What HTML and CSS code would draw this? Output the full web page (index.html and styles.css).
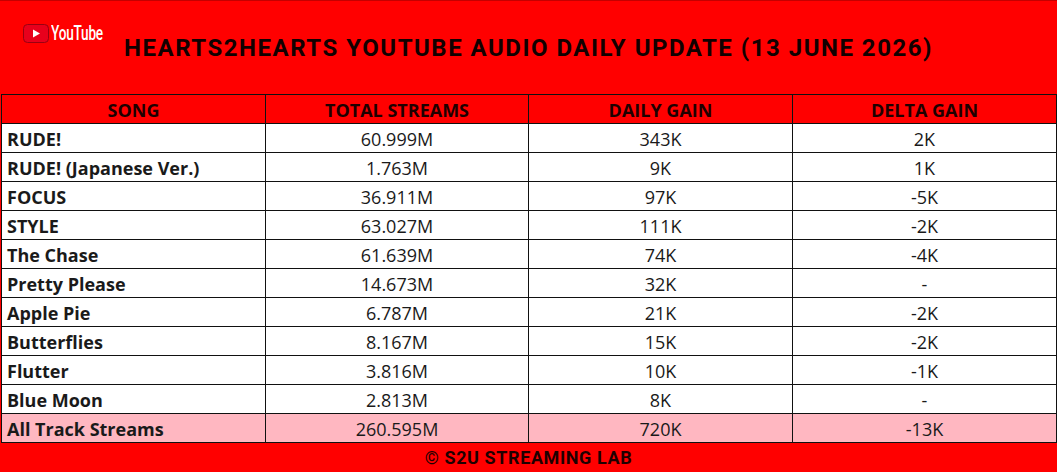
FILE: index.html
```html
<!DOCTYPE html>
<html lang="en">
<head>
<meta charset="utf-8">
<title>Hearts2Hearts YouTube Audio Daily Update</title>
<link rel="stylesheet" href="styles.css">
</head>
<body>
<div class="sheet">
  <header class="banner">
    <div class="logo">
      <svg class="yt-icon" width="26" height="19" viewBox="0 0 26 19" aria-hidden="true">
        <rect x="0.5" y="0.5" width="25" height="18" rx="4" ry="4" fill="#e8001c" stroke="#9a0010" stroke-width="1"/>
        <polygon points="10,5.5 10,13.5 17,9.5" fill="#ffffff"/>
      </svg>
      <span class="yt-word">YouTube</span>
    </div>
    <h1 class="title">HEARTS2HEARTS YOUTUBE AUDIO DAILY UPDATE (13 JUNE 2026)</h1>
    <div class="spacer"></div>
  </header>
  <table class="stats">
    <colgroup>
      <col class="c1"><col class="c2"><col class="c3"><col class="c4">
    </colgroup>
    <thead>
      <tr><th>SONG</th><th>TOTAL STREAMS</th><th>DAILY GAIN</th><th>DELTA GAIN</th></tr>
    </thead>
    <tbody>
      <tr><td class="song">RUDE!</td><td>60.999M</td><td>343K</td><td>2K</td></tr>
      <tr><td class="song">RUDE! (Japanese Ver.)</td><td>1.763M</td><td>9K</td><td>1K</td></tr>
      <tr><td class="song">FOCUS</td><td>36.911M</td><td>97K</td><td>-5K</td></tr>
      <tr><td class="song">STYLE</td><td>63.027M</td><td>111K</td><td>-2K</td></tr>
      <tr><td class="song">The Chase</td><td>61.639M</td><td>74K</td><td>-4K</td></tr>
      <tr><td class="song">Pretty Please</td><td>14.673M</td><td>32K</td><td>-</td></tr>
      <tr><td class="song">Apple Pie</td><td>6.787M</td><td>21K</td><td>-2K</td></tr>
      <tr><td class="song">Butterflies</td><td>8.167M</td><td>15K</td><td>-2K</td></tr>
      <tr><td class="song">Flutter</td><td>3.816M</td><td>10K</td><td>-1K</td></tr>
      <tr><td class="song">Blue Moon</td><td>2.813M</td><td>8K</td><td>-</td></tr>
      <tr class="total"><td class="song">All Track Streams</td><td>260.595M</td><td>720K</td><td>-13K</td></tr>
    </tbody>
  </table>
  <footer class="credit">© S2U STREAMING LAB</footer>
</div>
</body>
</html>
```
FILE: styles.css
```css
html, body {
  margin: 0;
  padding: 0;
  background: #ff0000;
}

.sheet {
  width: 1057px;
  height: 472px;
  background: #ff0000;
  display: flex;
  flex-direction: column;
  box-sizing: border-box;
  border-top: 1px solid #c40000;
}

.banner {
  height: 93px;
  display: grid;
  grid-template-columns: minmax(0, 1fr) auto minmax(0, 1fr);
  align-items: center;
}

.logo {
  align-self: start;
  display: flex;
  align-items: center;
  gap: 2px;
  padding: 22px 0 0 23px;
  overflow: visible;
}

.yt-icon {
  display: block;
  flex: none;
}

.yt-word {
  display: inline-block;
  flex: none;
  font-family: Roboto, "DejaVu Sans", sans-serif;
  font-weight: 500;
  font-size: 20px;
  color: #ffffff;
  letter-spacing: -0.3px;
  line-height: 1;
  transform: scaleX(0.68);
  transform-origin: left center;
}

.title {
  margin: 0;
  font-family: Roboto, "DejaVu Sans", sans-serif;
  font-weight: 700;
  font-size: 24px;
  color: #120000;
  letter-spacing: 1.5px;
  white-space: nowrap;
}

.stats {
  border-collapse: collapse;
  table-layout: fixed;
  width: 1056px;
  margin-left: 1px;
  font-family: "Open Sans", Lato, sans-serif;
  font-size: 18px;
  color: #1a1a1a;
  background: #ffffff;
}

.c1 { width: 264px; }
.c2 { width: 263px; }
.c3 { width: 264px; }
.c4 { width: 264px; }

.stats th,
.stats td {
  border: 1px solid #111111;
  height: 29px;
  padding: 2px 5px 0;
  text-align: center;
  line-height: 1;
  box-sizing: border-box;
}

.stats th {
  background: #ff0000;
  color: #1e0000;
  font-weight: 700;
}

.stats td.song {
  text-align: left;
  font-weight: 700;
}

.stats tr.total td {
  background: #ffb7c1;
}

.credit {
  flex: 1;
  display: flex;
  align-items: center;
  justify-content: center;
  font-family: Roboto, "DejaVu Sans", sans-serif;
  font-weight: 700;
  font-size: 18px;
  color: #1e0000;
  letter-spacing: 0.6px;
}
```
